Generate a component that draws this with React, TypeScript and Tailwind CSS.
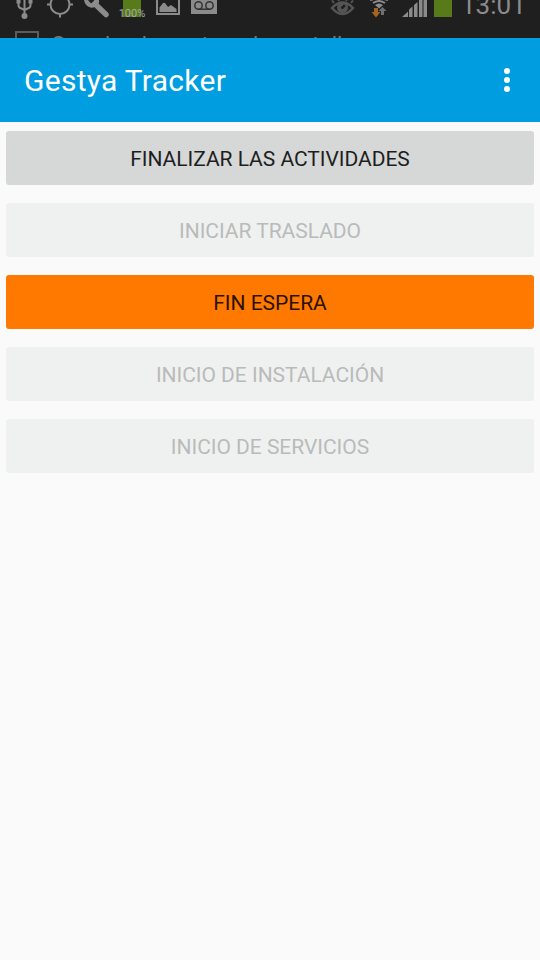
import { ReactNode } from "react";

type StatusIconProps = {
  className?: string;
  children: ReactNode;
};

type ActionButtonProps = {
  label: string;
  variant?: "default" | "active";
  disabled?: boolean;
};

const actions: ActionButtonProps[] = [
  { label: "Finalizar las actividades" },
  { label: "Iniciar traslado", disabled: true },
  { label: "Fin espera", variant: "active" },
  { label: "Inicio de instalación", disabled: true },
  { label: "Inicio de servicios", disabled: true },
];

const StatusIcon = ({ className = "w-9", children }: StatusIconProps) => (
  <svg className={`h-5 shrink-0 ${className}`} fill="none" stroke="#8b8b8b" strokeWidth="2">
    {children}
  </svg>
);

const StatusBar = () => (
  <div className="h-[38px] overflow-hidden bg-[#1f1f1f]">
    <div className="flex h-5 pl-1.5">
      {/* usb */}
      <StatusIcon>
        <path d="M18.5 0v16M12.500 0v5q0 3 3 3.500l3 1.500M24.500 0v5q0 3-3 3.500l-3 1.500" />
        <circle cx="18.500" cy="16" r="3" fill="#8b8b8b" stroke="none" />
        <path d="M10.500 0h4v3.500h-4zM22.500 0h4v3.500h-4z" fill="#8b8b8b" stroke="none" />
      </StatusIcon>
      {/* gps */}
      <StatusIcon>
        <circle cx="18" cy="4.500" r="9.500" />
        <path d="M5 4.500h4M27 4.500h4M18 13.500v4" />
      </StatusIcon>
      {/* wrench */}
      <StatusIcon>
        <path d="M17 4l11 10.500" strokeWidth="5.500" strokeLinecap="round" />
        <path d="M6 0q1 6 6.500 7.500 3 .5 5-1L21 3V0h-5v1l-3 2.500-3-3.500z" fill="#8b8b8b" stroke="none" />
      </StatusIcon>
      {/* battery level */}
      <StatusIcon>
        <path d="M9 0h18v17H9z" fill="#567b18" stroke="none" />
        <text x="18" y="17" textAnchor="middle" fill="#aaaaaa" stroke="none" className="font-[Roboto] text-[11px]">
          100%
        </text>
      </StatusIcon>
      {/* picture */}
      <StatusIcon>
        <path d="M7 -2v16h22V-2" />
        <path d="M9.500 12V7.500L13 3q2-1 3.500 2l1.500 2 3-2 5.500 4v3z" fill="#8b8b8b" stroke="none" />
      </StatusIcon>
      {/* voicemail */}
      <StatusIcon>
        <path d="M5 0h26v14H5z" fill="#8b8b8b" stroke="none" />
        <g stroke="#333333" strokeWidth="1.500">
          <circle cx="12.500" cy="5.500" r="3.700" />
          <circle cx="23.500" cy="5.500" r="3.700" />
          <path d="M12.500 9.200h11" />
        </g>
      </StatusIcon>
      <div className="grow" />
      {/* smart stay */}
      <StatusIcon>
        <g stroke="#555555" strokeWidth="2.500">
          <path d="M7 8Q17.500 -3 28 8 17.500 20 7 8z" />
          <circle cx="17.500" cy="7.500" r="3.500" strokeWidth="4" />
          <path d="M9 3L7 .5M14 1l-1-2M21 1l1-2M26 3l2-2.500" strokeWidth="2" />
        </g>
        <circle cx="19" cy="6" r="1.500" fill="#1f1f1f" stroke="none" />
      </StatusIcon>
      {/* wifi with traffic arrows */}
      <StatusIcon>
        <path d="M9 0Q18 -3 27 0M12 3q6-4 12 0" />
        <path d="M14 5q4-3 8 0l-4 3.500z" fill="#8b8b8b" stroke="none" />
        <path d="M13 8h4v4h2.500L15 17.500 10.500 12H13z" fill="#a5651f" stroke="none" />
        <path d="M20 15v-4h-2.500L21.500 7l4 4H23v4z" fill="#707070" stroke="none" />
      </StatusIcon>
      {/* signal */}
      <StatusIcon>
        <path
          d="M5 17L11 11.500V17zM12 17V9.500l3.500-3V17zM17 17V5l3.500-3v15zM22 17V0h3.500v17zM26.500 17V0H30v17z"
          fill="#8b8b8b"
          stroke="none"
        />
      </StatusIcon>
      {/* battery */}
      <StatusIcon className="w-5">
        <path d="M1 0h18v17H1z" fill="#567b18" stroke="none" />
      </StatusIcon>
      <div className="-mt-[11px] mr-[14px] ml-2 h-8 w-[65px] whitespace-nowrap font-[Roboto] text-[26px] leading-8 text-[#8b8b8b]">
        13:01
      </div>
    </div>
    <div className="flex pl-[15px] pt-[11px]">
      <div className="h-6 w-6 shrink-0 border-2 border-[#5c5c5c]" />
      <span className="ml-3 whitespace-nowrap font-[Roboto] text-[22px] leading-7 tracking-[0.1px] text-[#777777]">
        Guardando captura de pantalla
      </span>
    </div>
  </div>
);

const AppBar = () => (
  <header className="flex h-[84px] items-center justify-between bg-[#009de0] pl-6 pr-[30px]">
    <h1 className="pt-0.5 font-[Roboto] text-[30px] leading-9 tracking-[0.28px] text-white">Gestya Tracker</h1>
    <button className="flex flex-col gap-[3px]" aria-label="Menu">
      <span className="h-1.5 w-1.5 rounded-full bg-white" />
      <span className="h-1.5 w-1.5 rounded-full bg-white" />
      <span className="h-1.5 w-1.5 rounded-full bg-white" />
    </button>
  </header>
);

const ActionButton = ({ label, variant = "default", disabled }: ActionButtonProps) => {
  let colors = "bg-[#d6d7d7] text-[#1d1e1e]";
  if (variant === "active") colors = "bg-[#ff7900] text-[#2b1200]";
  if (disabled) colors = "bg-[#eff1f0] text-[#b9bbba]";
  return (
    <button
      disabled={disabled}
      className={`h-[54px] rounded-[3px] pt-[3px] font-[Roboto] text-[21px] tracking-[-0.03px] uppercase ${colors}`}
    >
      {label}
    </button>
  );
};

export default function App() {
  return (
    <div className="flex h-screen flex-col overflow-hidden bg-[#fafafa]">
      <StatusBar />
      <AppBar />
      <main className="flex flex-col gap-[18px] px-1.5 pt-[9px]">
        {actions.map((action) => (
          <ActionButton key={action.label} {...action} />
        ))}
      </main>
    </div>
  );
}
